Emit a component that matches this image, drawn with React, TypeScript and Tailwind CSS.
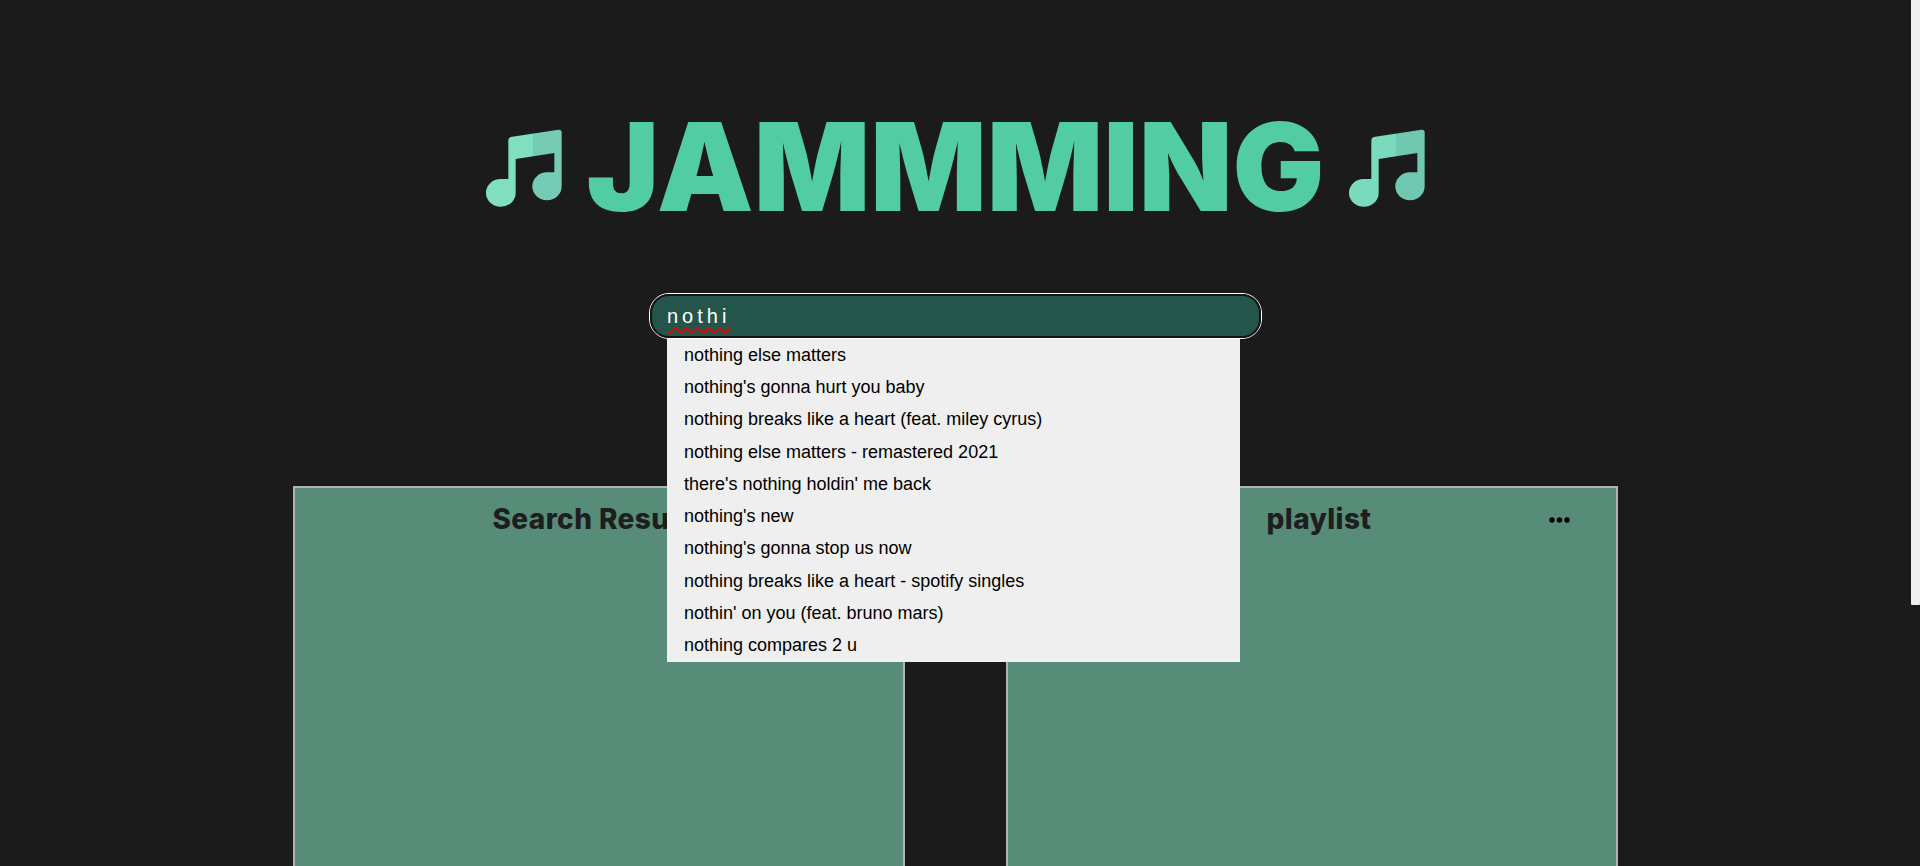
import React from "react";

const items = [
  "nothing else matters",
  "nothing's gonna hurt you baby",
  "nothing breaks like a heart (feat. miley cyrus)",
  "nothing else matters - remastered 2021",
  "there's nothing holdin' me back",
  "nothing's new",
  "nothing's gonna stop us now",
  "nothing breaks like a heart - spotify singles",
  "nothin' on you (feat. bruno mars)",
  "nothing compares 2 u",
];

function Note({ light, dark, id }: { light: string; dark: string; id: string }) {
  return (
    <svg width="76" height="78" viewBox="78 88 228 234" className="shrink-0">
      <defs>
        <linearGradient id={id} x1="78" x2="305" y1="0" y2="0" gradientUnits="userSpaceOnUse">
          <stop offset="0.617" stopColor={light} />
          <stop offset="0.617" stopColor={dark} />
        </linearGradient>
      </defs>
      <path
        fill={`url(#${id})`}
        d="M145 122 Q145 114 152 112 L295 90 Q305 89 305 98 L305 260 A44 42 0 0 1 217 260 A44 42 0 0 1 261 218 L283 218 L283 160 L167 178 L167 280 A44.5 41 0 0 1 78 280 A44.5 41 0 0 1 122 238 L145 238 Z"
      />
    </svg>
  );
}

function Panel({ title, children, shift }: { title: string; children?: React.ReactNode; shift?: boolean }) {
  return (
    <section className="relative h-[500px] w-[612px] shrink-0 border-2 border-[#b3b3b3] bg-[#578c79]">
      <h2
        className={`pt-[9px] text-center text-[28px] leading-[44px] font-extrabold tracking-[0.4px] text-[#1e1e1e] ${shift ? "pl-[14px]" : ""}`}
        style={{ fontFamily: '"Inter", sans-serif' }}
      >
        {title}
      </h2>
      {children}
    </section>
  );
}

export default function App() {
  return (
    <div className="flex h-[866px] w-full overflow-hidden bg-[#1b1b1b]">
      <main className="flex min-w-0 flex-1 flex-col items-center pt-[96px]">
        <header className="flex h-[146px] shrink-0 items-start gap-[25px] pt-[33px]">
          <Note id="n1" light="#80dfc1" dark="#75cbb3" />
          <h1
            className="-mt-[35px] text-[122px] leading-[146px] font-black tracking-[-0.1px] text-[#52cca3]"
            style={{ fontFamily: '"Inter", sans-serif' }}
          >
            JAMMMING
          </h1>
          <Note id="n2" light="#7adabd" dark="#6fc8af" />
        </header>

        <div className="relative z-10 mt-[51px] w-[613px] shrink-0">
          <div
            className="flex h-[46px] items-center rounded-[20px] border-[1.5px] border-white bg-[#25544a] pl-[17px] text-[20px] tracking-[4px] text-white outline-2 -outline-offset-3 outline-[#141414]"
            style={{ fontFamily: '"Liberation Sans", sans-serif' }}
          >
            <span className="underline decoration-[#e80000] decoration-wavy decoration-[1.5px] underline-offset-[4px]">nothi</span>
          </div>
          <ul
            className="absolute top-[46px] left-[18px] w-[573px] bg-[#efefef] text-[18px] text-black"
            style={{ fontFamily: '"Liberation Sans", sans-serif' }}
          >
            {items.map((t) => (
              <li key={t} className="flex h-[32.3px] items-center pl-[17px]">
                {t}
              </li>
            ))}
          </ul>
        </div>

        <div className="mt-[147px] flex shrink-0 gap-[101px]">
          <Panel title="Search Results" />
          <Panel title="playlist" shift>
            <svg width="22" height="6" viewBox="0 0 22 6" className="absolute top-[29px] right-[45px] fill-black">
              <circle cx="3" cy="3" r="2.7" />
              <circle cx="10.5" cy="3" r="2.7" />
              <circle cx="18" cy="3" r="2.7" />
            </svg>
          </Panel>
        </div>
      </main>
      <aside className="w-[9px] shrink-0">
        <div className="h-[605px] rounded-b-[1px] bg-[#efefef]" />
      </aside>
    </div>
  );
}
